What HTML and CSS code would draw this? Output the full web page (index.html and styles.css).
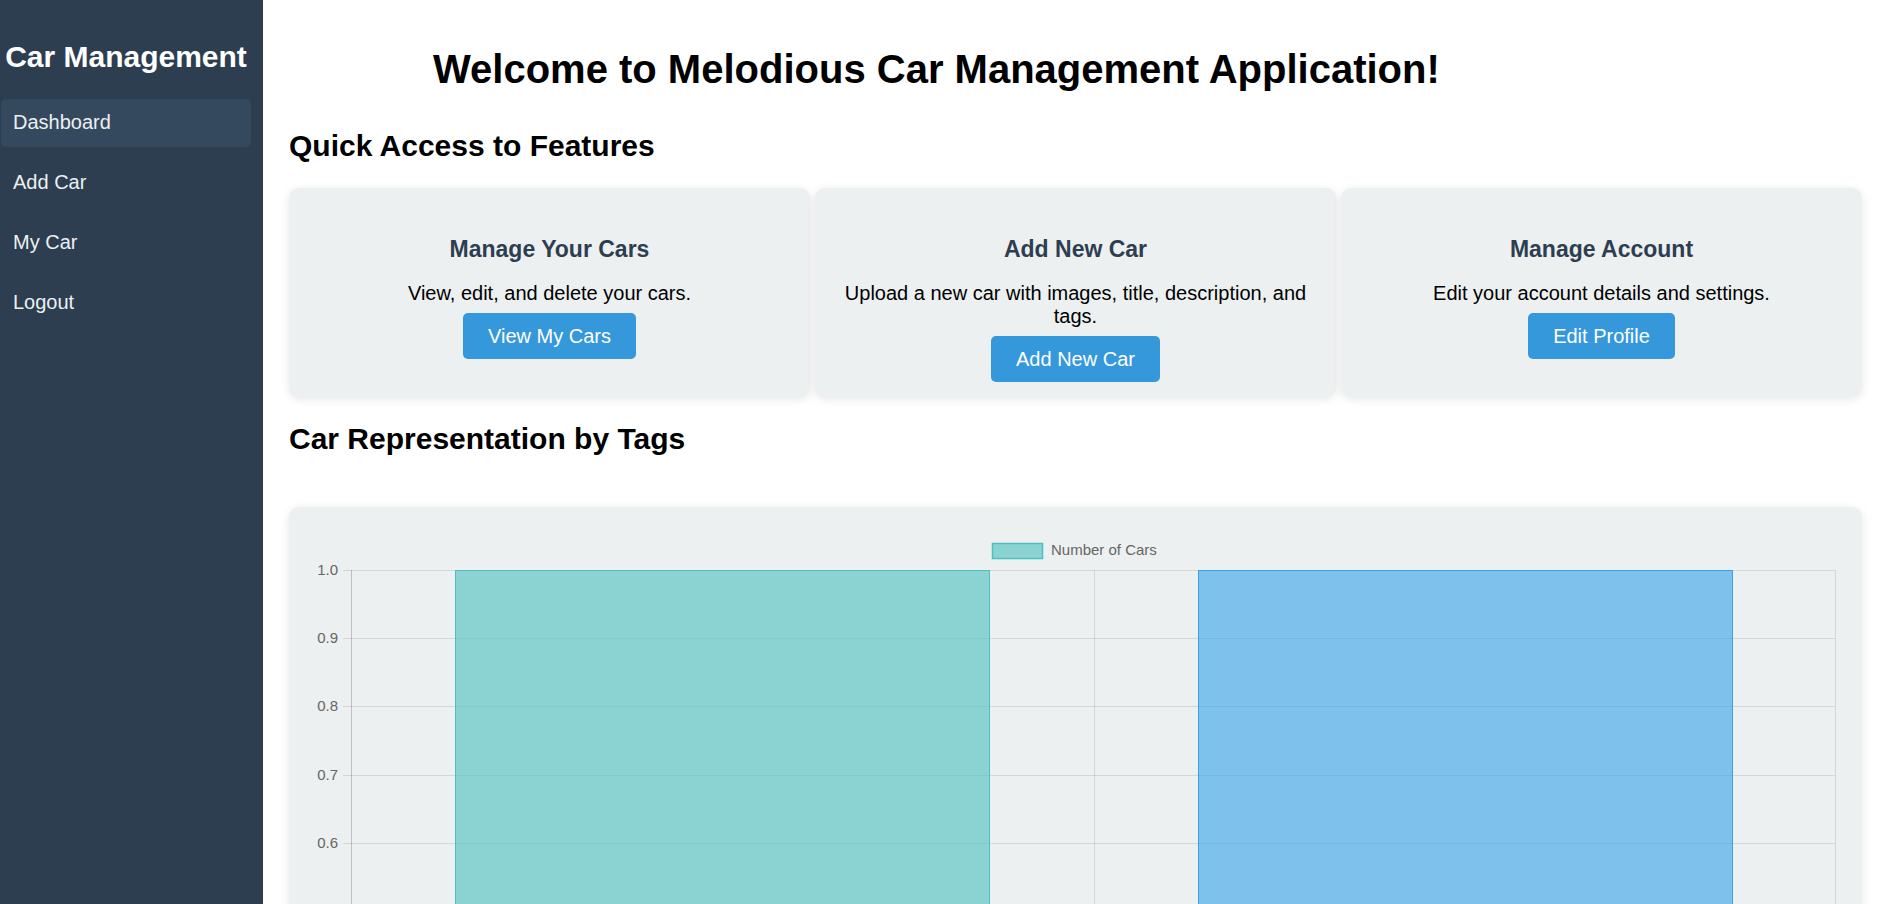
FILE: index.html
```html
<!DOCTYPE html>
<html lang="en">
<head>
<meta charset="utf-8">
<title>Car Management</title>
<link rel="stylesheet" href="styles.css">
</head>
<body>
<div class="layout">
  <aside class="sidebar">
    <h2 class="brand">Car Management</h2>
    <ul class="nav">
      <li><a class="nav-link active" href="#">Dashboard</a></li>
      <li><a class="nav-link" href="#">Add Car</a></li>
      <li><a class="nav-link" href="#">My Car</a></li>
      <li><a class="nav-link" href="#">Logout</a></li>
    </ul>
  </aside>
  <main class="main">
    <h1 class="welcome">Welcome to Melodious Car Management Application!</h1>
    <h2 class="section-title quick">Quick Access to Features</h2>
    <div class="cards">
      <div class="card">
        <h3 class="card-title">Manage Your Cars</h3>
        <p class="card-text">View, edit, and delete your cars.</p>
        <a class="btn" href="#">View My Cars</a>
      </div>
      <div class="card">
        <h3 class="card-title">Add New Car</h3>
        <p class="card-text">Upload a new car with images, title, description, and tags.</p>
        <a class="btn" href="#">Add New Car</a>
      </div>
      <div class="card">
        <h3 class="card-title">Manage Account</h3>
        <p class="card-text">Edit your account details and settings.</p>
        <a class="btn" href="#">Edit Profile</a>
      </div>
    </div>
    <h2 class="section-title tags">Car Representation by Tags</h2>
    <div class="chart-box">
      <svg class="chart" width="1523" height="760" viewBox="0 0 1523 760" xmlns="http://www.w3.org/2000/svg">
        <rect x="678.5" y="11.5" width="50" height="15" fill="rgba(75,192,192,0.6)" stroke="rgb(75,192,192)" stroke-width="1.5"/>
        <text class="legend-text" x="737" y="19" dominant-baseline="middle">Number of Cars</text>
        <g stroke="rgba(0,0,0,0.1)" stroke-width="1">
          <line x1="29" y1="38.5" x2="1521" y2="38.5"/>
          <line x1="29" y1="106.5" x2="1521" y2="106.5"/>
          <line x1="29" y1="174.5" x2="1521" y2="174.5"/>
          <line x1="29" y1="243.5" x2="1521" y2="243.5"/>
          <line x1="29" y1="311.5" x2="1521" y2="311.5"/>
          <line x1="29" y1="379.5" x2="1521" y2="379.5"/>
          <line x1="29" y1="448.5" x2="1521" y2="448.5"/>
          <line x1="29" y1="516.5" x2="1521" y2="516.5"/>
          <line x1="29" y1="584.5" x2="1521" y2="584.5"/>
          <line x1="29" y1="653.5" x2="1521" y2="653.5"/>
          <line x1="29" y1="721.5" x2="1521" y2="721.5"/>
          <line x1="780.5" y1="38" x2="780.5" y2="729"/>
          <line x1="1521.5" y1="38" x2="1521.5" y2="729"/>
        </g>
        <line x1="37.5" y1="38" x2="37.5" y2="729" stroke="rgba(0,0,0,0.2)" stroke-width="1"/>
        <g class="tick-text" text-anchor="end" dominant-baseline="middle">
          <text x="24" y="39">1.0</text>
          <text x="24" y="107">0.9</text>
          <text x="24" y="175">0.8</text>
          <text x="24" y="244">0.7</text>
          <text x="24" y="312">0.6</text>
          <text x="24" y="380">0.5</text>
          <text x="24" y="449">0.4</text>
          <text x="24" y="517">0.3</text>
          <text x="24" y="585">0.2</text>
          <text x="24" y="654">0.1</text>
          <text x="24" y="722">0.0</text>
        </g>
        <rect x="141.5" y="38.5" width="534" height="683" fill="rgba(75,192,192,0.6)" stroke="rgb(75,192,192)" stroke-width="1"/>
        <rect x="884.5" y="38.5" width="534" height="683" fill="rgba(54,162,235,0.6)" stroke="rgb(54,162,235)" stroke-width="1"/>
      </svg>
    </div>
  </main>
</div>
</body>
</html>
```

FILE: styles.css
```css
html, body {
  margin: 0;
  padding: 0;
}

body {
  font-family: "Liberation Sans", Arial, Helvetica, sans-serif;
  color: #000;
  background: #fff;
  overflow: hidden;
}

.layout {
  display: flex;
  min-height: 100vh;
}

.sidebar {
  flex: 0 0 263px;
  width: 263px;
  box-sizing: border-box;
  padding: 0 12px 0 1px;
  background: #2c3e50;
  color: #ecf0f1;
}

.brand {
  margin: 40px 0 25px;
  font-size: 30px;
  line-height: 34px;
  font-weight: bold;
  color: #fff;
  text-align: center;
  white-space: nowrap;
}

.nav {
  list-style: none;
  margin: 0;
  padding: 0;
  display: flex;
  flex-direction: column;
  gap: 12px;
}

.nav-link {
  display: block;
  padding: 12px 12px 13px;
  font-size: 20px;
  line-height: 23px;
  color: #ecf0f1;
  text-decoration: none;
  border-radius: 5px;
}

.nav-link.active {
  background: #34495e;
}

.main {
  flex: 1;
  min-width: 0;
  padding: 0 25px 25px 26px;
}

.welcome {
  margin: 46px 0 0 144px;
  font-size: 40px;
  line-height: 46px;
  font-weight: bold;
}

.section-title {
  font-size: 30px;
  line-height: 34px;
  font-weight: bold;
}

.section-title.quick {
  margin: 36.5px 0 25.5px;
}

.section-title.tags {
  margin: 24.5px 0 51px;
}

.cards {
  display: grid;
  grid-template-columns: repeat(3, 1fr);
  gap: 5px;
}

.card {
  background: #ecf0f1;
  border-radius: 10px;
  box-shadow: 0 2px 10px rgba(0, 0, 0, 0.1);
  padding: 25px 25px 15px;
  text-align: center;
}

.card-title {
  margin: 23px 0 20px;
  font-size: 23px;
  line-height: 26px;
  font-weight: bold;
  color: #2c3e50;
}

.card-text {
  margin: 0 0 8px;
  font-size: 20px;
  line-height: 23px;
}

.btn {
  display: inline-block;
  padding: 12.5px 25px;
  font-size: 20px;
  line-height: 21px;
  color: #fff;
  background: #3498db;
  border-radius: 5px;
  text-decoration: none;
}

.chart-box {
  background: #ecf0f1;
  border-radius: 10px;
  box-shadow: 0 2px 10px rgba(0, 0, 0, 0.1);
  padding: 25px;
}

.chart {
  display: block;
}

.legend-text {
  font-family: "Liberation Sans", Arial, Helvetica, sans-serif;
  font-size: 15px;
  fill: #666;
}

.tick-text {
  font-family: "Liberation Sans", Arial, Helvetica, sans-serif;
  font-size: 15px;
  fill: #666;
}
```
